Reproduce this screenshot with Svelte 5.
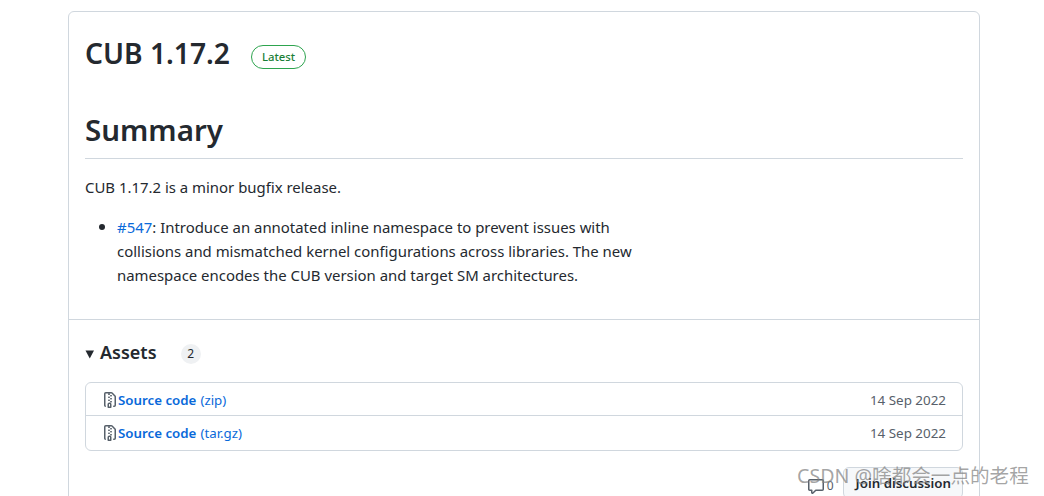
<script>
  const assets = [
    { name: 'Source code', ext: '(zip)', date: '14 Sep 2022' },
    { name: 'Source code', ext: '(tar.gz)', date: '14 Sep 2022' }
  ];
</script>

<div class="page">
  <section class="card">
    <div class="body">
      <div class="titlebar">
        <h1>CUB 1.17.2</h1>
        <span class="badge">Latest</span>
      </div>
      <h2>Summary</h2>
      <p class="intro">CUB 1.17.2 is a minor bugfix release.</p>
      <ul>
        <li><a href="#547">#547</a>: Introduce an annotated inline namespace to prevent issues with collisions and mismatched kernel configurations across libraries. The new namespace encodes the CUB version and target SM architectures.</li>
      </ul>
    </div>
    <div class="assets">
      <div class="assets-head">
        <svg class="caret" width="10" height="9" viewBox="0 0 10 9"><path d="M0.5 0.5h8.5L4.75 8.6z" fill="#24292f" /></svg>
        <span class="assets-title">Assets</span>
        <span class="counter">2</span>
      </div>
      <div class="list">
        {#each assets as a}
          <div class="row">
            <span class="link">
              <svg class="zip" width="16" height="16" viewBox="0 0 16 16" fill="#57606a"><path fill-rule="evenodd" d="M3.5 1.75a.25.25 0 01.25-.25h3a.75.75 0 000 1.5h.5a.75.75 0 000-1.5h2.086a.25.25 0 01.177.073l2.914 2.914a.25.25 0 01.073.177v8.586a.25.25 0 01-.25.25h-.5a.75.75 0 000 1.5h.5A1.75 1.75 0 0014 13.25V4.664c0-.464-.184-.909-.513-1.237L10.573.513A1.75 1.75 0 009.336 0H3.75A1.75 1.75 0 002 1.75v11.5c0 .649.353 1.214.874 1.515a.75.75 0 10.752-1.298.25.25 0 01-.126-.217V1.75zM8.75 3a.75.75 0 000 1.5h.5a.75.75 0 000-1.5h-.5zM6 5.25a.75.75 0 01.75-.75h.5a.75.75 0 010 1.5h-.5A.75.75 0 016 5.25zm2 1.5A.75.75 0 018.75 6h.5a.75.75 0 010 1.5h-.5A.75.75 0 018 6.75zm-1.25.75a.75.75 0 000 1.5h.5a.75.75 0 000-1.5h-.5zM8 9.75A.75.75 0 018.75 9h.5a.75.75 0 010 1.5h-.5A.75.75 0 018 9.75zm-.75.75a1.75 1.75 0 00-1.75 1.75v3c0 .414.336.75.75.75h2.5a.75.75 0 00.75-.75v-3a1.75 1.75 0 00-1.75-1.75h-.5zM7 12.25a.25.25 0 01.25-.25h.5a.25.25 0 01.25.25v2.25H7v-2.25z" /></svg>
              <strong>{a.name}</strong> <span class="ext">{a.ext}</span>
            </span>
            <span class="date">{a.date}</span>
          </div>
        {/each}
      </div>
      <div class="discussion">
        <span class="comments">
          <svg width="16" height="16" viewBox="0 0 16 16" fill="#57606a"><path fill-rule="evenodd" d="M1.5 2.75a.25.25 0 01.25-.25h12.5a.25.25 0 01.25.25v8.5a.25.25 0 01-.25.25h-6.5a.75.75 0 00-.53.22L4.5 14.44v-2.19a.75.75 0 00-.75-.75h-2a.25.25 0 01-.25-.25v-8.5zM1.75 1A1.75 1.75 0 000 2.75v8.5C0 12.216.784 13 1.75 13H3v1.543a1.457 1.457 0 002.487 1.03L8.061 13h6.189A1.75 1.75 0 0016 11.25v-8.5A1.75 1.75 0 0014.25 1H1.75z" /></svg>
          <span>0</span>
        </span>
        <span class="join">Join discussion</span>
      </div>
    </div>
  </section>
  <div class="watermark">CSDN @啥都会一点的老程</div>
</div>

<style>
  :global(body) {
    margin: 0;
    background: #fff;
  }
  .page {
    position: relative;
    width: 1044px;
    height: 496px;
    overflow: hidden;
    padding: 11px 64px 0 68px;
    box-sizing: border-box;
    font-family: "Noto Sans", "Noto Sans CJK SC", sans-serif;
    font-size: 14.93px;
    line-height: 24px;
    color: #24292f;
  }
  .card {
    width: 912px;
    box-sizing: border-box;
    border: 1px solid #d0d7de;
    border-radius: 6px;
    background: #fff;
    height: 560px;
  }
  .body {
    padding: 16px 16px 0;
    box-sizing: border-box;
    border-bottom: 1px solid #d0d7de;
    height: 308px;
  }
  .titlebar {
    display: flex;
    align-items: center;
    gap: 21px;
    height: 50px;
  }
  h1 {
    margin: 0;
    font-size: 28.2px;
    line-height: 50px;
    font-weight: 600;
  }
  .badge {
    border: 1px solid #2da44e;
    border-radius: 12px;
    color: #1a7f37;
    font-size: 11.3px;
    line-height: 22px;
    padding: 0 10px;
    font-weight: 500;
    margin-top: 8px;
  }
  h2 {
    margin: 35px 0 16px;
    font-size: 29.5px;
    line-height: 34px;
    height: 46px;
    font-weight: 600;
    border-bottom: 1px solid #d0d7de;
    box-sizing: border-box;
  }
  p {
    margin: 0 0 16px;
  }
  ul {
    margin: 0;
    padding-left: 32px;
    width: 552px;
    box-sizing: border-box;
    list-style: none;
  }
  li {
    position: relative;
  }
  li::before {
    content: "";
    position: absolute;
    left: -18.5px;
    top: 9px;
    width: 6px;
    height: 6px;
    border-radius: 50%;
    background: #24292f;
  }
  a {
    color: #0969da;
    text-decoration: none;
  }
  .assets {
    padding: 16px 16px 0;
  }
  .assets-head {
    display: flex;
    align-items: center;
    height: 34px;
  }
  .caret {
    margin-right: 5px;
    margin-top: 2px;
  }
  .assets-title {
    font-size: 18px;
    font-weight: 600;
    margin-top: -2px;
  }
  .counter {
    margin-left: 24px;
    width: 20px;
    height: 20px;
    border-radius: 10px;
    background: #eff1f3;
    text-align: center;
    font-size: 12px;
    line-height: 20px;
    margin-top: 2px;
  }
  .list {
    margin-top: 12px;
    border: 1px solid #d0d7de;
    border-radius: 6px;
  }
  .row {
    display: flex;
    justify-content: space-between;
    align-items: center;
    height: 32px;
    padding: 2px 16px 0;
    box-sizing: border-box;
  }
  .row + .row {
    border-top: 1px solid #d0d7de;
    height: 35px;
    padding-top: 0;
  }
  .link {
    display: flex;
    align-items: center;
    color: #0969da;
    font-size: 13.3px;
  }
  .link strong {
    font-weight: 600;
    margin-right: 4px;
  }
  .zip {
    flex: none;
  }
  .date {
    color: #57606a;
    font-size: 13.4px;
  }
  .discussion {
    display: flex;
    justify-content: flex-end;
    align-items: center;
    gap: 9px;
    margin-top: 16px;
  }
  .comments {
    display: flex;
    align-items: center;
    gap: 3px;
    color: #57606a;
    font-size: 12px;
    margin-top: 6px;
  }
  .join {
    border: 1px solid #d0d7de;
    border-radius: 6px;
    background: #f6f8fa;
    font-weight: 600;
    font-size: 13.3px;
    line-height: 30px;
    padding: 0 11px 0 12px;
  }
  .watermark {
    position: absolute;
    left: 797px;
    top: 462px;
    font-size: 19.6px;
    line-height: 28px;
    color: rgba(130, 130, 130, 0.72);
    white-space: nowrap;
  }
</style>
